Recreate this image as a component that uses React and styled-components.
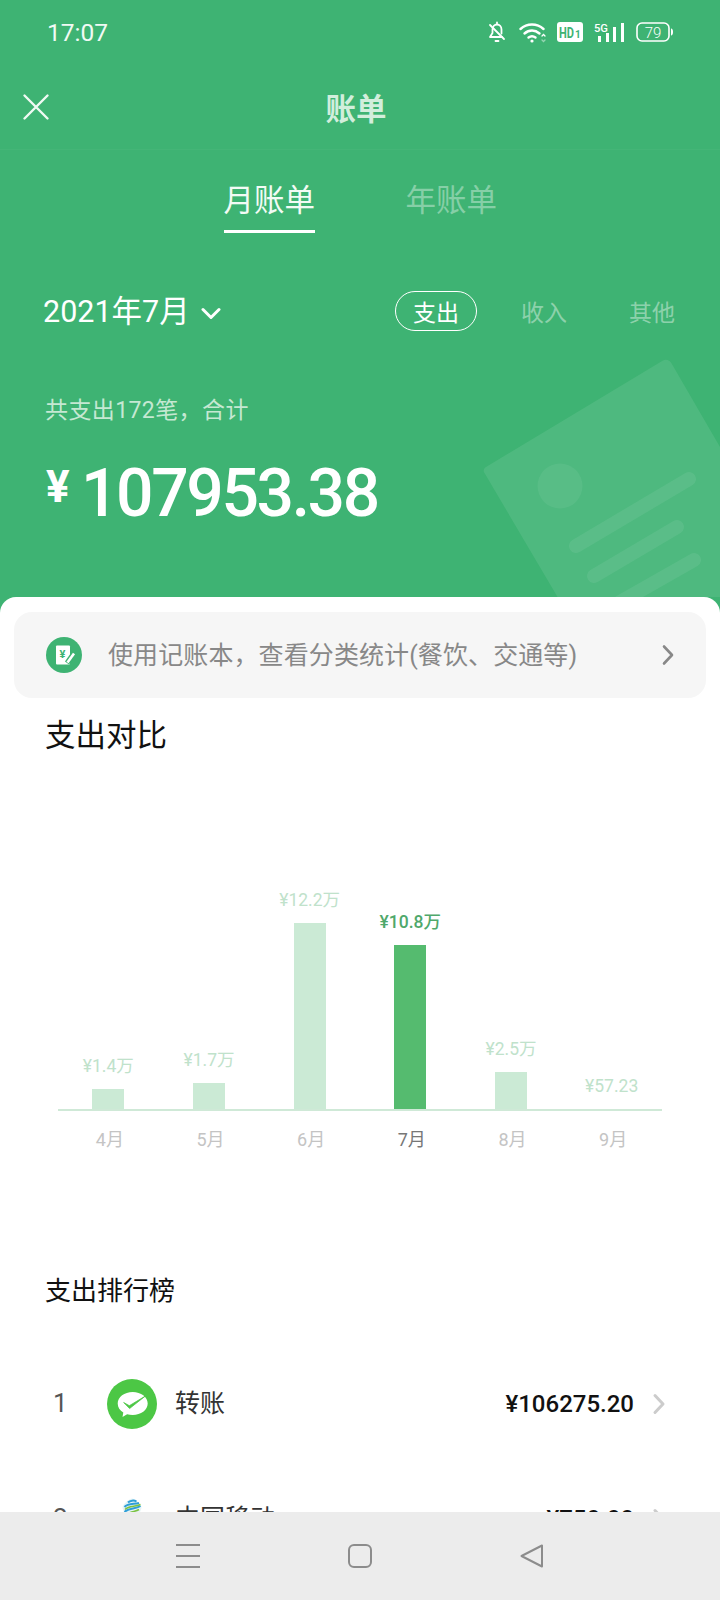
import React from "react";
import styled, { createGlobalStyle } from "styled-components";

const GlobalStyle = createGlobalStyle`
	html, body {
		margin: 0;
		padding: 0;
		background: #3eb373;
	}
	* {
		box-sizing: border-box;
	}
`;

const Page = styled.div`
	width: 720px;
	height: 1600px;
	display: flex;
	flex-direction: column;
	overflow: hidden;
	background: #3eb373;
	font-family: Roboto, "Noto Sans CJK SC", sans-serif;
`;

const Header = styled.header`
	position: relative;
	height: 597px;
	flex: none;
	overflow: hidden;
	color: #fff;
`;

const Decoration = styled.svg`
	position: absolute;
	left: 460px;
	top: 340px;
`;

const StatusBar = styled.div`
	height: 64px;
	padding: 0 47px;
	display: flex;
	align-items: center;
	justify-content: space-between;
`;

const Clock = styled.span`
	font-size: 24.5px;
	color: #f0faf4;
`;

const StatusIcons = styled.div`
	display: flex;
	align-items: center;
`;

const TitleBar = styled.div`
	position: relative;
	height: 86px;
	padding-right: 8px;
	display: flex;
	align-items: center;
	justify-content: center;
	border-bottom: 1px solid rgba(255, 255, 255, 0.03);
`;

const CloseIcon = styled.svg`
	position: absolute;
	left: 22px;
	top: 29px;
`;

const Title = styled.h1`
	margin: 0;
	font-size: 30.5px;
	font-weight: 700;
	color: #d2eedc;
`;

const Tabs = styled.div`
	display: flex;
	justify-content: center;
	gap: 91px;
`;

const Tab = styled.div`
	width: 91px;
	padding-top: 31px;
	padding-bottom: 9px;
	font-size: 30.5px;
	line-height: 40px;
	white-space: nowrap;
	color: ${(props) => (props.$active ? "#f2fbf5" : "rgba(255,255,255,0.38)")};
	border-bottom: 3px solid ${(props) => (props.$active ? "#fff" : "transparent")};
`;

const FilterRow = styled.div`
	margin-top: 58px;
	padding: 0 27px 0 43px;
	height: 40px;
	display: flex;
	align-items: center;
	justify-content: space-between;
`;

const MonthPicker = styled.div`
	display: flex;
	align-items: center;
	gap: 11px;
	padding-bottom: 4px;
	font-size: 30.5px;
`;

const MonthArrow = styled.svg`
	margin-top: 8px;
`;

const TypeList = styled.div`
	display: flex;
	gap: 26px;
`;

const TypeItem = styled.div`
	width: 82px;
	height: 40px;
	display: flex;
	align-items: center;
	justify-content: center;
	font-size: 23px;
	border-radius: 20px;
	border: 1px solid ${(props) => (props.$active ? "#fff" : "transparent")};
	color: ${(props) => (props.$active ? "#fff" : "rgba(255,255,255,0.42)")};
`;

const CountText = styled.div`
	margin-top: 65px;
	padding-left: 45px;
	font-size: 23px;
	letter-spacing: 0.4px;
	line-height: 30px;
	color: #c5e8d2;
`;

const AmountRow = styled.div`
	margin-top: 31px;
	padding-left: 46px;
	display: flex;
	align-items: flex-start;
`;

const Currency = styled.span`
	margin-top: 4px;
	width: 35px;
	font-size: 44px;
	line-height: 52px;
	font-weight: 700;
`;

const Amount = styled.span`
	font-size: 66px;
	line-height: 74px;
	font-weight: 500;
	letter-spacing: -2.4px;
`;

const Card = styled.main`
	flex: 1;
	min-height: 0;
	overflow: hidden;
	background: #fff;
	border-radius: 16px 16px 0 0;
	padding-top: 15px;
`;

const Banner = styled.div`
	margin: 0 14px;
	height: 86px;
	padding: 0 31px 0 32px;
	display: flex;
	align-items: center;
	background: #f6f6f6;
	border-radius: 18px;
`;

const BannerText = styled.span`
	flex: 1;
	margin-left: 26px;
	padding-bottom: 5px;
	font-size: 25px;
	letter-spacing: 0.1px;
	color: #888;
	white-space: nowrap;
`;

const SectionTitle = styled.h2`
	margin: ${(props) => props.$top}px 0 0 45px;
	font-size: ${(props) => props.$size}px;
	font-weight: 400;
	line-height: 40px;
	color: #111;
`;

const ChartBars = styled.div`
	margin: 132px 58px 0 58px;
	display: grid;
	grid-template-columns: repeat(6, 1fr);
	align-items: end;
	border-bottom: 2px solid #cfe9d7;
`;

const BarColumn = styled.div`
	display: flex;
	flex-direction: column;
	align-items: center;
`;

const BarLabel = styled.span`
	margin-bottom: 11px;
	font-size: 17.5px;
	line-height: 24px;
	font-weight: ${(props) => (props.$active ? 500 : 400)};
	color: ${(props) => (props.$active ? "#4fa86b" : "#c0e2cb")};
`;

const Bar = styled.div`
	width: 32px;
	height: ${(props) => props.$height}px;
	background: ${(props) => (props.$active ? "#55bb6f" : "#cbead5")};
`;

const MonthRow = styled.div`
	margin: 17px 58px 0 58px;
	display: grid;
	grid-template-columns: repeat(6, 1fr);
`;

const MonthLabel = styled.span`
	padding-left: 3px;
	text-align: center;
	font-size: 18px;
	line-height: 24px;
	color: ${(props) => (props.$active ? "#777" : "#c4c4c4")};
`;

const RankList = styled.div`
	margin-top: 35px;
`;

const RankRow = styled.div`
	height: 115px;
	padding: 0 54px 0 53px;
	display: flex;
	align-items: center;
`;

const RankNumber = styled.span`
	width: 54px;
	padding-bottom: 2px;
	font-size: 26px;
	color: #555;
`;

const RankIcon = styled.div`
	width: 50px;
	height: 50px;
	display: flex;
	align-items: center;
	justify-content: center;
`;

const RankName = styled.span`
	flex: 1;
	margin-left: 18px;
	padding-bottom: 5px;
	font-size: 25px;
	color: #333;
`;

const RankAmount = styled.span`
	font-size: 24px;
	font-weight: 500;
	color: #111;
`;

const RankChevron = styled.span`
	display: flex;
	margin-left: 18px;
`;

const BottomNav = styled.nav`
	height: 88px;
	flex: none;
	display: flex;
	align-items: center;
	justify-content: center;
	gap: 148px;
	background: #ececec;
`;

const BellOffIcon = () => (
	<svg width="18" height="22" viewBox="0 0 18 22" fill="none" stroke="#fff" strokeWidth="1.8" strokeLinecap="round" strokeLinejoin="round" style={{ marginRight: 13 }}>
		<path d="M9 1.5v2M4.5 8.5C4.5 5.5 6.5 3.5 9 3.5s4.5 2 4.5 5v4M4.5 8.5v3.5L2 16h12" />
		<path d="M2 4l14 14" />
		<path d="M7.5 20h3" />
	</svg>
);

const WifiIcon = () => (
	<svg width="28" height="22" viewBox="0 0 28 22" fill="none" stroke="#fff" strokeWidth="2.4" strokeLinecap="round" style={{ marginRight: 10 }}>
		<path d="M1.5 8C8 2 18 2 24.5 8" />
		<path d="M5.5 12.5C10 8.5 16 8.5 20.5 12.5" />
		<path d="M9.5 16.5C11.5 15 14.5 15 16.5 16.5" />
		<circle cx="13" cy="20" r="1.6" fill="#fff" stroke="none" />
		<path d="M23 15l1.5-1.5L26 15" strokeWidth="1.3" />
		<path d="M23 19l1.5 1.5L26 19" strokeWidth="1.3" stroke="rgba(255,255,255,0.45)" />
	</svg>
);

const HdIcon = () => (
	<svg width="26" height="20" viewBox="0 0 26 20" style={{ marginRight: 11 }}>
		<rect width="26" height="20" rx="3" fill="#fff" />
		<text x="2" y="15.5" fontFamily="Roboto, sans-serif" fontWeight="700" fontSize="14" textLength="15" lengthAdjust="spacingAndGlyphs" fill="#3eb373">HD</text>
		<text x="18" y="15.5" fontFamily="Roboto, sans-serif" fontWeight="700" fontSize="10" fill="#3eb373">1</text>
	</svg>
);

const SignalIcon = () => (
	<svg width="31" height="20" viewBox="0 0 31 20" style={{ marginRight: 11 }}>
		<text x="0" y="10" fontFamily="Roboto, sans-serif" fontWeight="500" fontSize="11" textLength="14" lengthAdjust="spacingAndGlyphs" fill="#fff">5G</text>
		<rect x="4" y="14" width="3" height="6" fill="#fff" />
		<rect x="12" y="11" width="3" height="9" fill="#fff" />
		<rect x="19" y="5" width="3" height="15" fill="#fff" />
		<rect x="27" y="1" width="3" height="19" fill="#fff" />
	</svg>
);

const BatteryIcon = () => (
	<svg width="37" height="20" viewBox="0 0 37 20">
		<rect x="1" y="1" width="32" height="18" rx="5" fill="none" stroke="#fff" strokeWidth="1.6" />
		<path d="M35 6.5c1.3.3 2 1 2 3.5s-.7 3.2-2 3.5z" fill="#fff" />
		<text x="17" y="15.5" textAnchor="middle" fontFamily="Roboto, sans-serif" fontWeight="300" fontSize="15" fill="#fff">79</text>
	</svg>
);

const LedgerIcon = () => (
	<svg width="36" height="36" viewBox="0 0 36 36" style={{ flex: "none" }}>
		<circle cx="18" cy="18" r="18" fill="#3eb373" />
		<rect x="10" y="8.5" width="14" height="19" rx="1" fill="#fff" />
		<text x="16.5" y="21" textAnchor="middle" fontFamily="Roboto, sans-serif" fontWeight="700" fontSize="11" fill="#3eb373">¥</text>
		<path d="M21 26l7-10" stroke="#3eb373" strokeWidth="5" />
		<path d="M21.5 25.5l6.5-9" stroke="#fff" strokeWidth="2.6" />
	</svg>
);

const WechatPayIcon = () => (
	<svg width="50" height="50" viewBox="0 0 50 50">
		<circle cx="25" cy="25" r="25" fill="#4cc745" />
		<path d="M25.7 13c-8.3 0-15 5-15 11.500 0 3.700 2.200 7 5.600 9.100l-.8 4.400 4.600-2.700c1.800.5 3.600.7 5.600.7 8.300 0 15-5.100 15-11.500S34 13 25.700 13z" fill="#fff" />
		<path d="M16.700 23.500l5.600 3.200L38 17.300l-15.400 12.200z" fill="#4cc745" stroke="#4cc745" strokeWidth="0.8" strokeLinejoin="round" />
	</svg>
);

const MobileIcon = () => (
	<svg width="20" height="24" viewBox="0 0 20 24" style={{ marginBottom: 18 }}>
		<path d="M10 .5c2.500 0 9 5.500 9.500 8.500.4 3-6 14.500-9.500 14.500S.1 12 .5 9C1 6 7.500.5 10 .5z" fill="#e6f4f6" />
		<path d="M6 4.500C8 2.500 12 2 14.500 3.500M2.500 9C6 5 12 6.500 17 5M2.500 14C7 9.500 13 11.500 18.500 8" fill="none" stroke="#2f9fd8" strokeWidth="2" />
		<path d="M3 11.500C7 7.500 12.500 9 18.500 6.500M5 16.500C9 13 13 14 17 11.500" fill="none" stroke="#7cc242" strokeWidth="1.600" />
	</svg>
);

const Chevron = ({ color, strokeWidth = 2.6 }) => (
	<svg width="14" height="22" viewBox="0 0 14 22" fill="none" stroke={color} strokeWidth={strokeWidth} strokeLinecap="round" strokeLinejoin="round">
		<path d="M3 2.500l8 8.500-8 8.500" />
	</svg>
);

const bars = [
	{ month: "4月", label: "¥1.4万", height: 20 },
	{ month: "5月", label: "¥1.7万", height: 26 },
	{ month: "6月", label: "¥12.2万", height: 186 },
	{ month: "7月", label: "¥10.8万", height: 164, active: true },
	{ month: "8月", label: "¥2.5万", height: 37 },
	{ month: "9月", label: "¥57.23", height: 0 },
];

const ranks = [
	{ id: 1, name: "转账", amount: "¥106275.20", icon: <WechatPayIcon /> },
	{ id: 2, name: "中国移动", amount: "¥750.00", icon: <MobileIcon /> },
];

const App = () => {
	return (
		<Page>
			<GlobalStyle />
			<Header>
				<Decoration width="260" height="257" viewBox="0 0 260 257">
					<path d="M203 20.500a6 6 0 0 1 8 2L340 245 173 385 24.500 133a4 4 0 0 1 1.500-6z" fill="rgba(255,255,255,0.085)" />
					<circle cx="100" cy="146" r="22.500" fill="rgba(255,255,255,0.06)" />
					<g stroke="rgba(255,255,255,0.07)" strokeWidth="14" strokeLinecap="round">
						<path d="M116 206L229 139" />
						<path d="M134 236L217 187" />
						<path d="M160 262L234 220" />
					</g>
				</Decoration>
				<StatusBar>
					<Clock>17:07</Clock>
					<StatusIcons>
						<BellOffIcon />
						<WifiIcon />
						<HdIcon />
						<SignalIcon />
						<BatteryIcon />
					</StatusIcons>
				</StatusBar>
				<TitleBar>
					<CloseIcon width="28" height="28" viewBox="0 0 28 28" fill="none" stroke="#f0faf4" strokeWidth="2.4" strokeLinecap="round">
						<path d="M2.500 2.500l23 23M25.500 2.500l-23 23" />
					</CloseIcon>
					<Title>账单</Title>
				</TitleBar>
				<Tabs>
					<Tab $active>月账单</Tab>
					<Tab>年账单</Tab>
				</Tabs>
				<FilterRow>
					<MonthPicker>
						2021年7月
						<MonthArrow width="20" height="13" viewBox="0 0 20 13" fill="none" stroke="#fff" strokeWidth="3" strokeLinecap="round" strokeLinejoin="round">
							<path d="M2 2.500l8 8 8-8" />
						</MonthArrow>
					</MonthPicker>
					<TypeList>
						<TypeItem $active>支出</TypeItem>
						<TypeItem>收入</TypeItem>
						<TypeItem>其他</TypeItem>
					</TypeList>
				</FilterRow>
				<CountText>共支出172笔，合计</CountText>
				<AmountRow>
					<Currency>¥</Currency>
					<Amount>107953.38</Amount>
				</AmountRow>
			</Header>
			<Card>
				<Banner>
					<LedgerIcon />
					<BannerText>使用记账本，查看分类统计(餐饮、交通等)</BannerText>
					<Chevron color="#888" />
				</Banner>
				<SectionTitle $top={18} $size={30.5}>支出对比</SectionTitle>
				<ChartBars>
					{bars.map((item) => (
						<BarColumn key={item.month}>
							<BarLabel $active={item.active}>{item.label}</BarLabel>
							<Bar $height={item.height} $active={item.active} />
						</BarColumn>
					))}
				</ChartBars>
				<MonthRow>
					{bars.map((item) => (
						<MonthLabel key={item.month} $active={item.active}>{item.month}</MonthLabel>
					))}
				</MonthRow>
				<SectionTitle $top={119} $size={26}>支出排行榜</SectionTitle>
				<RankList>
					{ranks.map((rank) => (
						<RankRow key={rank.id}>
							<RankNumber>{rank.id}</RankNumber>
							<RankIcon>{rank.icon}</RankIcon>
							<RankName>{rank.name}</RankName>
							<RankAmount>{rank.amount}</RankAmount>
							<RankChevron>
								<Chevron color="#ccc" strokeWidth={3} />
							</RankChevron>
						</RankRow>
					))}
				</RankList>
			</Card>
			<BottomNav>
				<svg width="24" height="26" viewBox="0 0 24 26" stroke="#8c8c8c" strokeWidth="2">
					<path d="M0 2h24M0 13h24M0 24h24" />
				</svg>
				<svg width="24" height="24" viewBox="0 0 24 24" fill="none" stroke="#8c8c8c" strokeWidth="2">
					<rect x="1" y="1" width="22" height="22" rx="5" />
				</svg>
				<svg width="24" height="24" viewBox="0 0 24 24" fill="none" stroke="#8c8c8c" strokeWidth="2" strokeLinejoin="round">
					<path d="M22 1.500v21L1.500 12z" />
				</svg>
			</BottomNav>
		</Page>
	);
};

export default App;
